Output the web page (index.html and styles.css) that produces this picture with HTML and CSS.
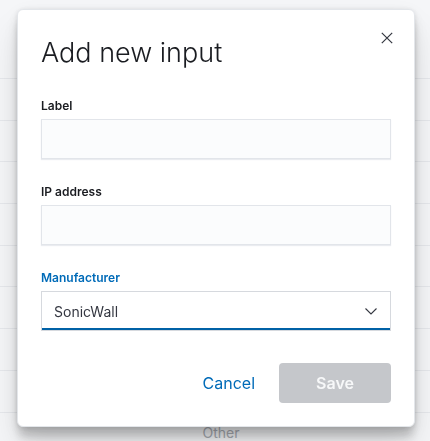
FILE: index.html
```html
<!DOCTYPE html>
<html lang="en">
<head>
    <meta charset="UTF-8">
    <meta name="viewport" content="width=device-width, initial-scale=1.0">
    <title>Inputs</title>
    <link rel="stylesheet" href="styles.css">
</head>
<body>
    <!-- inputs table behind the modal -->
    <div class="page">
        <div class="page-head"></div>
        <div class="table-row"></div>
        <div class="table-row"></div>
        <div class="table-row"></div>
        <div class="table-row"></div>
        <div class="table-row"></div>
        <div class="table-row"></div>
        <div class="table-row"></div>
        <div class="table-row"></div>
        <div class="table-row"><span class="cell-muted">Other</span></div>
    </div>

    <div class="overlay">
        <div class="modal">
            <button class="modal-close" type="button" aria-label="Close">
                <svg width="16" height="16" viewBox="0 0 16 16">
                    <path d="M2.8 2.8 L13.2 13.2 M13.2 2.8 L2.8 13.2" stroke="#343741" stroke-width="1.2" fill="none"/>
                </svg>
            </button>

            <div class="modal-header">
                <h1>Add new input</h1>
            </div>

            <form class="modal-body" id="input-form">
                <div class="form-row">
                    <label for="input-label">Label</label>
                    <input type="text" id="input-label" name="input-label">
                </div>

                <div class="form-row">
                    <label for="input-ip">IP address</label>
                    <input type="text" id="input-ip" name="input-ip">
                </div>

                <div class="form-row">
                    <label for="input-manufacturer" class="is-focused">Manufacturer</label>
                    <div class="select-wrap">
                        <select id="input-manufacturer" name="input-manufacturer">
                            <option>SonicWall</option>
                            <option>Cisco</option>
                            <option>Fortinet</option>
                            <option>Other</option>
                        </select>
                        <svg class="select-arrow" width="16" height="16" viewBox="0 0 16 16">
                            <path d="M2.5 5.5 L8 11 L13.5 5.5" stroke="#343741" stroke-width="1.1" fill="none"/>
                        </svg>
                    </div>
                </div>
            </form>

            <div class="modal-footer">
                <button type="button" class="btn-empty">Cancel</button>
                <button type="submit" form="input-form" class="btn-fill" disabled>Save</button>
            </div>
        </div>
    </div>
</body>
</html>
```

FILE: styles.css
```css
* {
    box-sizing: border-box;
    margin: 0;
    padding: 0;
}

body {
    font-family: Inter, "Noto Sans", sans-serif;
    background-color: #f5f6f8;
    color: #1a1c21;
    overflow: hidden;
}

/* page behind */
.page-head {
    height: 78px;
}

.table-row {
    height: 41.7px;
    border-top: 1px solid #e6e8ec;
    display: flex;
    align-items: center;
    justify-content: center;
    padding-left: 12px;
}

.cell-muted {
    font-size: 14px;
    color: #a9adb4;
}

/* modal */
.overlay {
    position: fixed;
    inset: 0;
    padding: 9px 0 0 17px;
    display: flex;
    align-items: flex-start;
}

.modal {
    position: relative;
    width: 398px;
    background-color: white;
    border: 1px solid #e3e6ea;
    border-radius: 6px;
    box-shadow: 0 1px 5px rgba(0, 0, 0, 0.1),
                0 3.6px 13px rgba(0, 0, 0, 0.07),
                0 8.4px 23px rgba(0, 0, 0, 0.06),
                0 12px 10px -2px rgba(0, 0, 0, 0.16),
                0 23px 35px rgba(0, 0, 0, 0.1);
}

.modal-close {
    position: absolute;
    top: 16px;
    right: 15px;
    width: 24px;
    height: 24px;
    border: none;
    background: none;
    display: flex;
    align-items: center;
    justify-content: center;
    cursor: pointer;
}

.modal-header {
    padding: 23px 48px 16px 23px;
}

.modal-header h1 {
    font-size: 27px;
    line-height: 40px;
    font-weight: 300;
    color: #1a1c21;
}

.modal-body {
    padding: 8px 23px 8px;
    display: flex;
    flex-direction: column;
    gap: 24px;
}

.form-row {
    display: flex;
    flex-direction: column;
    gap: 4px;
}

label {
    font-size: 12px;
    line-height: 18px;
    font-weight: 600;
    color: #1a1c21;
}

label.is-focused {
    color: #006bb8;
}

input,
select {
    width: 100%;
    height: 40px;
    padding: 0 12px;
    font-family: inherit;
    font-size: 14px;
    color: #343741;
    background-color: #fbfcfd;
    border: 1px solid #e2e5ea;
    border-radius: 0;
    box-shadow: 0 1px 1px rgba(152, 162, 179, 0.2);
    outline: none;
}

.select-wrap {
    position: relative;
}

select {
    appearance: none;
    background-color: white;
    border-color: #d6d9de;
    box-shadow: inset 0 -2px 0 #0061a6;
}

.select-arrow {
    position: absolute;
    right: 12px;
    top: 12px;
    pointer-events: none;
}

.modal-footer {
    padding: 24px 23px 23px;
    display: flex;
    justify-content: flex-end;
    align-items: center;
    gap: 16px;
}

.btn-empty,
.btn-fill {
    height: 40px;
    font-family: inherit;
    font-size: 16px;
    border: none;
    border-radius: 4px;
    cursor: pointer;
}

.btn-empty {
    padding: 0 8px;
    background: none;
    color: #006bb8;
}

.btn-fill {
    width: 112px;
    background-color: #c5c7cb;
    color: #f7f8f9;
    font-weight: 600;
}

.btn-fill:disabled {
    cursor: not-allowed;
}
```
